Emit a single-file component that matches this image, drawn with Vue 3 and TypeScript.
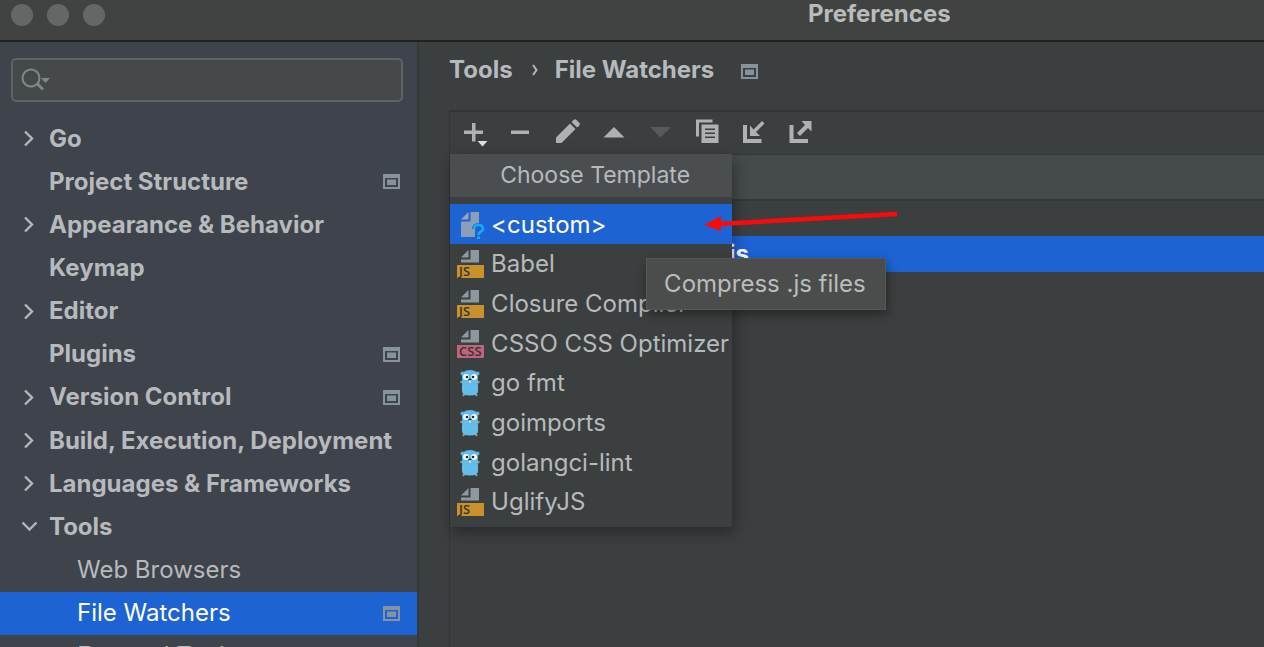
<script setup lang="ts">
import { ref } from 'vue'

type FileKind = 'custom' | 'js' | 'css' | 'go'
type Expand = 'open' | 'closed' | 'none'

interface TreeItem {
  label: string
  expand: Expand
  project?: boolean
  child?: boolean
}

interface Template {
  label: string
  kind: FileKind
}

const tree: TreeItem[] = [
  { label: 'Go', expand: 'closed' },
  { label: 'Project Structure', expand: 'none', project: true },
  { label: 'Appearance & Behavior', expand: 'closed' },
  { label: 'Keymap', expand: 'none' },
  { label: 'Editor', expand: 'closed' },
  { label: 'Plugins', expand: 'none', project: true },
  { label: 'Version Control', expand: 'closed', project: true },
  { label: 'Build, Execution, Deployment', expand: 'closed' },
  { label: 'Languages & Frameworks', expand: 'closed' },
  { label: 'Tools', expand: 'open' },
  { label: 'Web Browsers', expand: 'none', child: true },
  { label: 'File Watchers', expand: 'none', child: true, project: true },
  { label: 'External Tools', expand: 'none', child: true },
]

const templates: Template[] = [
  { label: '<custom>', kind: 'custom' },
  { label: 'Babel', kind: 'js' },
  { label: 'Closure Compiler', kind: 'js' },
  { label: 'CSSO CSS Optimizer', kind: 'css' },
  { label: 'go fmt', kind: 'go' },
  { label: 'goimports', kind: 'go' },
  { label: 'golangci-lint', kind: 'go' },
  { label: 'UglifyJS', kind: 'js' },
]

const page = ref('File Watchers')
const template = ref('<custom>')
const query = ref('')
</script>

<template>
  <div class="window">
    <header class="titlebar">
      <div class="lights">
        <button type="button" class="light" aria-label="Close"></button>
        <button type="button" class="light" aria-label="Minimize"></button>
        <button type="button" class="light" aria-label="Zoom"></button>
      </div>
      <h1 class="title">Preferences</h1>
    </header>

    <div class="body">
      <aside class="sidebar">
        <div class="search">
          <label for="search" aria-label="Search settings">
            <svg width="32" height="24" viewBox="0 0 32 24" fill="none">
              <circle cx="10" cy="10" r="8.5" stroke="#82878a" stroke-width="2" />
              <path d="M16 15.5L22 21.500" stroke="#82878a" stroke-width="3" />
              <path d="M20 10H29L24.500 15Z" fill="#82878a" />
            </svg>
          </label>
          <input id="search" v-model="query" type="text" />
        </div>

        <ul class="tree">
          <li v-for="item in tree" :key="item.label">
            <button
              type="button"
              class="node"
              :class="{ child: item.child, selected: item.label === page }"
              @click="page = item.label"
            >
              <svg v-if="item.expand === 'closed'" class="chevron" width="17" height="17" viewBox="0 0 17 17">
                <path d="M4 1.500L11 8.500L4 15.500" />
              </svg>
              <svg v-else-if="item.expand === 'open'" class="chevron" width="17" height="17" viewBox="0 0 17 17">
                <path d="M1.500 4.500L8.500 11.500L15.500 4.500" />
              </svg>
              <span class="label">{{ item.label }}</span>
              <svg v-if="item.project" class="project" width="17" height="15" viewBox="0 0 17 15">
                <path d="M0 0H17V15H0ZM2 4V13H15V4Z" fill-rule="evenodd" />
                <rect x="4" y="5.500" width="9" height="5.500" />
              </svg>
            </button>
          </li>
        </ul>
      </aside>

      <main class="main">
        <nav class="crumbs" aria-label="Breadcrumb">
          <a href="#tools">Tools</a>
          <svg width="8" height="14" viewBox="0 0 8 14" fill="none">
            <path d="M2 2L5.500 7L2 12" stroke="#b5b7b8" stroke-width="2" />
          </svg>
          <a href="#file-watchers">File Watchers</a>
          <svg class="project" width="17" height="15" viewBox="0 0 17 15">
            <path d="M0 0H17V15H0ZM2 4V13H15V4Z" fill-rule="evenodd" />
            <rect x="4" y="5.500" width="9" height="5.500" />
          </svg>
        </nav>

        <section class="panel">
          <div class="toolbar">
            <button type="button" aria-label="Add">
              <svg width="32" height="32" viewBox="0 0 32 32">
                <path d="M7 14.500H15V7H18.500V14.500H26V18H18.500V25.500H15V18H7Z" />
                <path d="M20.500 25H30.500L25.500 30.500Z" fill="#dedfe0" />
              </svg>
            </button>
            <button type="button" aria-label="Remove">
              <svg width="32" height="32" viewBox="0 0 32 32"><rect x="7" y="14.500" width="18" height="3.500" /></svg>
            </button>
            <button type="button" aria-label="Edit">
              <svg width="32" height="32" viewBox="0 0 32 32">
                <path d="M5 21.500L19 7.500L24.500 13L10.500 27H5Z" />
                <path d="M20.500 6L22.500 4Q24 2.500 25.500 4L28.500 7Q29.500 8.500 28 10L26 11.500Z" />
              </svg>
            </button>
            <button type="button" aria-label="Move up">
              <svg width="32" height="32" viewBox="0 0 32 32"><path d="M5.500 21.500L16 11L26.500 21.500Z" /></svg>
            </button>
            <button type="button" aria-label="Move down" disabled>
              <svg width="32" height="32" viewBox="0 0 32 32"><path d="M5 11H26L15.500 21.500Z" /></svg>
            </button>
            <button type="button" aria-label="Copy">
              <svg width="32" height="32" viewBox="0 0 32 32">
                <path d="M4 3.500H20.500V6.500H7V20.500H4Z" />
                <path
                  d="M9.500 8.500H26.500V27H9.500ZM13 12.500V14H23V12.500ZM13 16.500V18H23V16.500ZM13 20.500V22H23V20.500Z"
                  fill-rule="evenodd"
                />
              </svg>
            </button>
            <button type="button" aria-label="Import">
              <svg width="32" height="32" viewBox="0 0 32 32">
                <path d="M4 9H8V23H22.500V27H4Z" />
                <path d="M11 9.500L14.500 13.500L23 5L25.500 7.500L17 16L21 20H11Z" />
              </svg>
            </button>
            <button type="button" aria-label="Export">
              <svg width="32" height="32" viewBox="0 0 32 32">
                <path d="M3.500 9H7.500V23H22V27H3.500Z" />
                <path d="M15.500 5H25.500V15.500L22 12L14 20L11 17L19 9Z" />
              </svg>
            </button>
          </div>

          <table class="watchers">
            <thead>
              <tr><th scope="col"></th></tr>
            </thead>
            <tbody>
              <tr><td></td></tr>
              <tr class="selected"><td>Compress minified .js</td></tr>
            </tbody>
          </table>

          <div class="menu">
            <h2>Choose Template</h2>
            <ul>
              <li v-for="t in templates" :key="t.label">
                <button type="button" :class="{ selected: t.label === template }" @click="template = t.label">
                  <svg width="28" height="28" viewBox="0 0 28 28">
                    <g v-if="t.kind === 'custom'">
                      <path d="M4 8.500L11.500 1V8.500Z" fill="#9ba6b1" />
                      <path d="M13.500 1H22V12Q15 12 15 18H18V26H4V10.500H13.500Z" fill="#8b9fb8" />
                      <path
                        d="M17 18Q17 14 21.500 14Q26 14 26 17.500Q26 19.500 23.500 21Q21.500 22 21.500 24"
                        fill="none"
                        stroke="#13adf0"
                        stroke-width="2.6"
                      />
                      <rect x="20" y="25.500" width="3" height="2.500" fill="#13adf0" />
                    </g>
                    <g v-else-if="t.kind === 'go'">
                      <path d="M3.500 13.500L7 12M22.500 13.500L19 12M6 27L8 24.500M20 27L18 24.500" stroke="#a39a94" stroke-width="2" />
                      <circle cx="5.500" cy="4.500" r="2" fill="#5cb6e3" />
                      <circle cx="20.500" cy="4.500" r="2" fill="#5cb6e3" />
                      <path
                        d="M5 8Q5 1 13 1Q21 1 21 8Q20.500 13 21 18V22Q21 26.500 13 26.500Q5 26.500 5 22V18Q5.500 13 5 8Z"
                        fill="#62bdea"
                      />
                      <circle cx="9" cy="8" r="3" fill="#f4f8fa" />
                      <circle cx="17" cy="8" r="3" fill="#f4f8fa" />
                      <circle cx="10" cy="8" r="1.300" fill="#26323a" />
                      <circle cx="16" cy="8" r="1.300" fill="#26323a" />
                      <rect x="12" y="11" width="2" height="2.500" fill="#f2eee8" />
                      <ellipse cx="13" cy="10.500" rx="1.600" ry="1.100" fill="#30302e" />
                    </g>
                    <g v-else>
                      <path d="M4 7.500L11.500 0V7.500Z" fill="#8d989f" />
                      <path d="M13.500 0H22V12.500H4V9.500H13.500Z" fill="#8d989f" />
                      <rect y="15" width="27" height="13" :fill="t.kind === 'js' ? '#c9912b' : '#bd6480'" />
                      <text x="2" y="26" class="badge">{{ t.kind === 'js' ? 'JS' : 'CSS' }}</text>
                    </g>
                  </svg>
                  <span>{{ t.label }}</span>
                </button>
              </li>
            </ul>
          </div>

          <div class="tooltip" role="tooltip">Compress .js files</div>

          <svg class="pointer" width="196" height="24" viewBox="0 0 196 24">
            <path d="M16 13L194 3" stroke="#fb0a0a" stroke-width="4.500" />
            <path d="M1 14L18 5V20Z" fill="#fb0a0a" />
          </svg>
        </section>
      </main>
    </div>
  </div>
</template>

<style>
body {
  margin: 0;
  background: #3c3f40;
}
</style>

<style scoped>
* {
  box-sizing: border-box;
}

.window {
  display: flex;
  flex-direction: column;
  height: 100vh;
  overflow: hidden;
  background: #3b3f40;
  color: #b7babc;
  font-family: Inter, "Liberation Sans", sans-serif;
  font-size: 24px;
  line-height: 28px;
  white-space: nowrap;
}

button {
  margin: 0;
  padding: 0;
  border: 0;
  background: none;
  color: inherit;
  font: inherit;
  text-align: left;
}

svg {
  display: block;
  flex: none;
  overflow: visible;
}

ul {
  margin: 0;
  padding: 0;
  list-style: none;
}

.titlebar {
  display: grid;
  flex: none;
  grid-template-columns: 1fr 1fr;
  height: 42px;
  border-bottom: 2px solid #1f2223;
  background: #414342;
}

.lights {
  display: flex;
  gap: 14px;
  padding: 4px 11px;
}

.light {
  width: 22px;
  height: 22px;
  border-radius: 50%;
  background: #646766;
}

.title {
  margin: 0;
  padding-left: 176px;
  font-size: 24px;
  font-weight: 700;
  color: #b9bbba;
}

.body {
  display: flex;
  flex: 1;
  min-height: 0;
}

.sidebar {
  flex: none;
  width: 33%;
  overflow: hidden;
  background: #3f434c;
}

.search {
  display: flex;
  align-items: center;
  height: 44px;
  margin: 16px 14px 15px 11px;
  padding-left: 8px;
  border: 2px solid #5f6366;
  border-radius: 5px;
  background: #45494a;
}

.search input {
  flex: 1;
  min-width: 0;
  padding: 0 6px;
  border: 0;
  outline: 0;
  background: none;
  color: inherit;
  font: inherit;
}

.tree {
  display: grid;
  grid-template-columns: minmax(0, 1fr);
  grid-auto-rows: 1fr;
  min-height: 561px;
}

.node {
  display: grid;
  grid-template-columns: 17px minmax(0, 1fr) auto;
  gap: 11px;
  align-items: center;
  width: 100%;
  height: 100%;
  padding: 0 17px 0 21px;
  font-weight: 700;
}

.label {
  grid-column: 2;
}

.node.child {
  padding-left: 49px;
  font-weight: 400;
}

.node.selected {
  background: #1d63d3;
  color: #ffffff;
}

.chevron {
  fill: none;
  stroke: #b3b6ba;
  stroke-width: 2.4;
}

.project {
  fill: #87939c;
}

.main {
  flex: 1;
  min-width: 0;
  padding: 14px 0 0 30px;
  border-left: 2px solid #35393a;
}

.crumbs {
  display: flex;
  align-items: center;
  height: 28px;
  font-weight: 700;
}

.crumbs a {
  color: inherit;
  text-decoration: none;
}

.crumbs a + svg {
  margin: 0 16px 0 18px;
}

.crumbs a + .project {
  margin: 2px 0 0 27px;
}

.panel {
  position: relative;
  height: 100%;
  margin-top: 26px;
  border-top: 2px solid #323637;
  border-left: 1px solid #323637;
}

.toolbar {
  display: flex;
  gap: 15px;
  height: 42px;
  padding: 4px 7px;
}

.toolbar button {
  width: 32px;
  height: 32px;
}

.toolbar svg {
  fill: #afb1b3;
}

.toolbar button:disabled svg {
  fill: #585a59;
}

.watchers {
  width: 100%;
  border-collapse: collapse;
}

.watchers th {
  height: 45px;
  padding: 0;
  border-top: 1px solid #34383a;
  border-bottom: 2px solid #34383a;
  background: #454a4c;
}

.watchers td {
  height: 36px;
  padding: 0 0 0 44px;
  font-weight: 700;
}

.watchers .selected {
  background: #1d63d3;
  color: #ffffff;
}

.menu {
  position: absolute;
  top: 42px;
  left: 0;
  min-width: 282px;
  padding-bottom: 6px;
  background: #3c3f40;
  box-shadow: 2px 5px 14px rgba(0, 0, 0, 0.35);
}

.menu h2 {
  margin: 0 0 7px;
  padding: 7px 0 8px 8px;
  background: #4a4e51;
  font-size: 23px;
  font-weight: 400;
  text-align: center;
}

.menu ul {
  display: grid;
  grid-auto-rows: 1fr;
  min-height: 317px;
}

.menu button {
  display: flex;
  align-items: center;
  gap: 6px;
  width: 100%;
  height: 100%;
  padding: 2px 3px 0 7px;
}

.menu .selected {
  background: #1d63d3;
  color: #ffffff;
}

.badge {
  fill: #3a3427;
  font-family: "Open Sans", "Liberation Sans", sans-serif;
  font-size: 13px;
  font-weight: 600;
  line-height: 13px;
}

.tooltip {
  position: absolute;
  top: 146px;
  left: 196px;
  padding: 11px 19px 11px 17px;
  border: 1px solid #555857;
  background: #4b4d4c;
  box-shadow: 1px 4px 10px rgba(0, 0, 0, 0.4);
  color: #bbbcbc;
}

.pointer {
  position: absolute;
  top: 99px;
  left: 253px;
}
</style>
